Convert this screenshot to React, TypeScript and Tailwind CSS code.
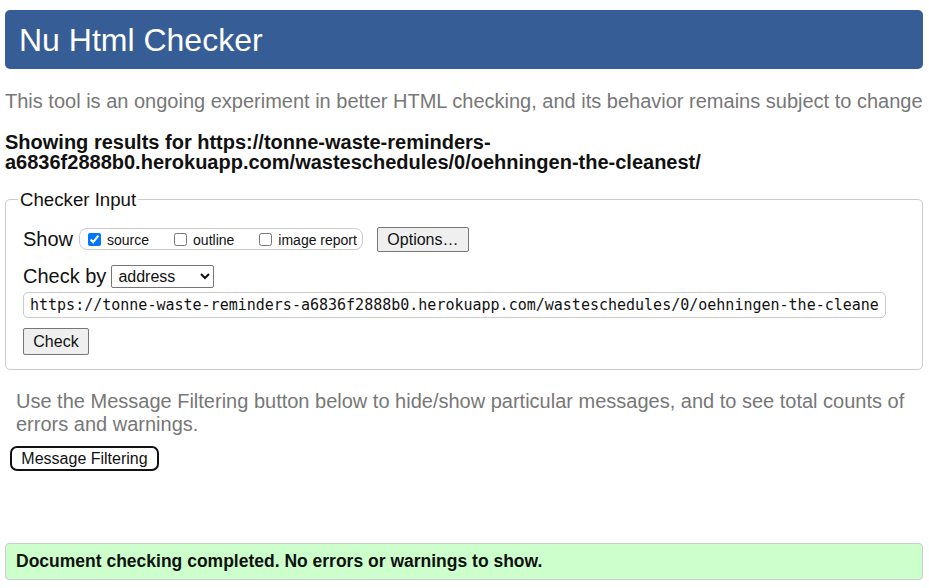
export default function App() {
  const url =
    "https://tonne-waste-reminders-a6836f2888b0.herokuapp.com/wasteschedules/0/oehningen-the-cleanest/";

  return (
    <div className="min-h-[588px] bg-white pl-[5px] pr-[6px] pt-[10px] font-['Liberation_Sans',Arial,sans-serif] text-[#111]">
      <header className="h-[59px] rounded-[5px] bg-[#365d95] pl-[14px] pt-[12px]">
        <h1 className="text-[32px] leading-[37px] text-white">Nu Html Checker</h1>
      </header>

      <p className="mt-[21px] whitespace-nowrap text-[20px] leading-[23px] text-[#777]">
        This tool is an ongoing experiment in better HTML checking, and its behavior remains subject to change
      </p>

      <p className="mt-[19px] text-[20px] font-bold leading-[20px]">
        Showing results for https://tonne-waste-reminders-
        <br />
        a6836f2888b0.herokuapp.com/wasteschedules/0/oehningen-the-cleanest/
      </p>

      <fieldset className="mt-[17px] rounded-[5px] border border-[#ccc] pb-[14px] pl-[17px] pr-[17px] pt-[16px]">
        <legend className="-ml-[5px] px-[2px] text-[18.67px] leading-[21px]">Checker Input</legend>

        <div className="flex h-[26px] items-center">
          <span className="text-[20px] leading-[23px]">Show</span>
          <div className="ml-[6px] flex h-[22px] items-center rounded-[8px] border border-[#ccc] pl-[8px] pr-[5px] text-[14px]">
            <label className="flex items-center">
              <input type="checkbox" defaultChecked className="h-[13px] w-[13px]" />
              <span className="ml-[6px] mt-[3px]">source</span>
            </label>
            <label className="ml-[25px] flex items-center">
              <input type="checkbox" className="h-[13px] w-[13px]" />
              <span className="ml-[6px] mt-[3px]">outline</span>
            </label>
            <label className="ml-[25px] flex items-center">
              <input type="checkbox" className="h-[13px] w-[13px]" />
              <span className="ml-[6px] mt-[3px]">image report</span>
            </label>
          </div>
          <button className="ml-[14px] h-[25px] w-[92px] rounded-[2px] border border-[#767676] bg-[#efefef] text-[16px]">
            Options…
          </button>
        </div>

        <div className="mt-[11px] flex h-[25px] items-end">
          <span className="text-[20px] leading-[23px]">Check by</span>
          <select
            defaultValue="address"
            className="ml-[5px] h-[23px] w-[103px] rounded-[2px] border border-[#767676] bg-white pl-[2px] text-[16px]"
          >
            <option value="address">address</option>
            <option value="file">file upload</option>
            <option value="text">text input</option>
          </select>
        </div>

        <input
          readOnly
          value={url}
          className="mt-[4px] block h-[26px] w-[863px] rounded-[5px] border border-[#ccc] px-[6px] font-['DejaVu_Sans_Mono',monospace] text-[15px]"
        />

        <button className="mt-[10px] block h-[27px] w-[66px] rounded-[2px] border border-[#767676] bg-[#efefef] text-[16px]">
          Check
        </button>
      </fieldset>

      <p className="mt-[20px] pl-[11px] pr-[11px] text-[20px] leading-[23px] text-[#777]">
        Use the Message Filtering button below to hide/show particular messages, and to see total counts of errors and warnings.
      </p>

      <button className="ml-[5px] mt-[10px] h-[25px] w-[149px] rounded-[7px] border-2 border-[#111] bg-white text-[16px] leading-[18px]">
        Message Filtering
      </button>

      <div className="mt-[72px] flex h-[37px] items-center rounded-[4px] border border-[#ccc] bg-[#ccffcc] pl-[10px]">
        <p className="text-[17.5px] font-bold">Document checking completed. No errors or warnings to show.</p>
      </div>
    </div>
  );
}
